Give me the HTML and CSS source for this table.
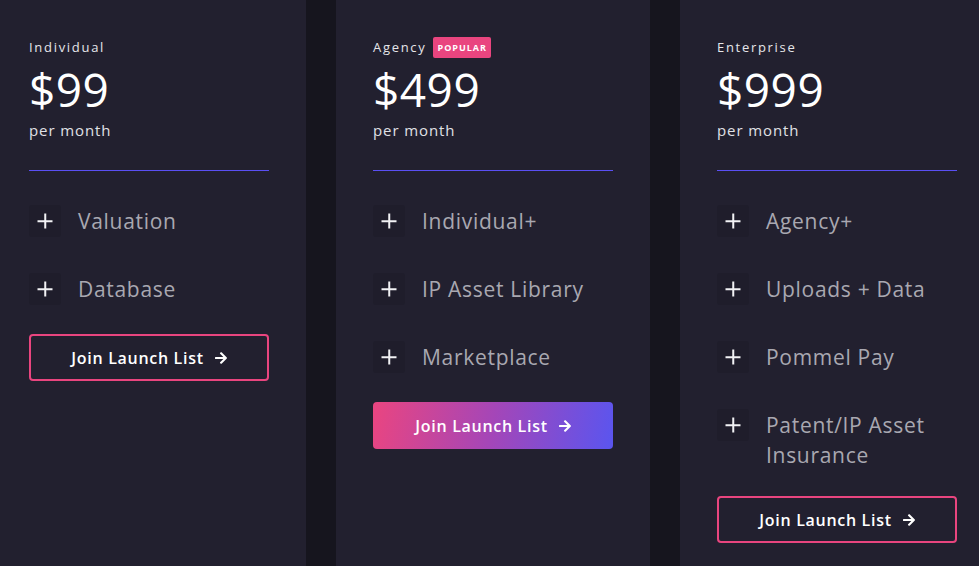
FILE: index.html
```html
<!DOCTYPE html>
<html>
<head>
<meta charset="utf-8">
<link rel="stylesheet" href="styles.css">
</head>
<body>
<div class="plans">
  <section class="card">
    <div class="label">Individual</div>
    <div class="price">$99</div>
    <div class="period">per month</div>
    <div class="divider"></div>
    <ul class="features">
      <li><span class="plus"></span><span class="ftext">Valuation</span></li>
      <li><span class="plus"></span><span class="ftext">Database</span></li>
    </ul>
    <a class="btn btn-outline">Join Launch List <svg class="arrow" viewBox="0 0 448 512"><path d="M190.5 66.9l22.2-22.2c9.4-9.4 24.6-9.4 33.9 0L441 239c9.4 9.4 9.4 24.6 0 33.9L246.6 467.3c-9.4 9.4-24.6 9.4-33.9 0l-22.2-22.2c-9.5-9.5-9.3-25 .4-34.3L311.4 296H24c-13.3 0-24-10.7-24-24v-32c0-13.3 10.7-24 24-24h287.4L190.9 101.2c-9.8-9.3-10-24.8-.4-34.3z"/></svg></a>
  </section>
  <section class="card">
    <div class="label">Agency <span class="badge">POPULAR</span></div>
    <div class="price">$499</div>
    <div class="period">per month</div>
    <div class="divider"></div>
    <ul class="features">
      <li><span class="plus"></span><span class="ftext">Individual+</span></li>
      <li><span class="plus"></span><span class="ftext">IP Asset Library</span></li>
      <li><span class="plus"></span><span class="ftext">Marketplace</span></li>
    </ul>
    <a class="btn btn-fill">Join Launch List <svg class="arrow" viewBox="0 0 448 512"><path d="M190.5 66.9l22.2-22.2c9.4-9.4 24.6-9.4 33.9 0L441 239c9.4 9.4 9.4 24.6 0 33.9L246.6 467.3c-9.4 9.4-24.6 9.4-33.9 0l-22.2-22.2c-9.5-9.5-9.3-25 .4-34.3L311.4 296H24c-13.3 0-24-10.7-24-24v-32c0-13.3 10.7-24 24-24h287.4L190.9 101.2c-9.8-9.3-10-24.8-.4-34.3z"/></svg></a>
  </section>
  <section class="card">
    <div class="label">Enterprise</div>
    <div class="price">$999</div>
    <div class="period">per month</div>
    <div class="divider"></div>
    <ul class="features">
      <li><span class="plus"></span><span class="ftext">Agency+</span></li>
      <li><span class="plus"></span><span class="ftext">Uploads + Data</span></li>
      <li><span class="plus"></span><span class="ftext">Pommel Pay</span></li>
      <li><span class="plus"></span><span class="ftext">Patent/IP Asset Insurance</span></li>
    </ul>
    <a class="btn btn-outline">Join Launch List <svg class="arrow" viewBox="0 0 448 512"><path d="M190.5 66.9l22.2-22.2c9.4-9.4 24.6-9.4 33.9 0L441 239c9.4 9.4 9.4 24.6 0 33.9L246.6 467.3c-9.4 9.4-24.6 9.4-33.9 0l-22.2-22.2c-9.5-9.5-9.3-25 .4-34.3L311.4 296H24c-13.3 0-24-10.7-24-24v-32c0-13.3 10.7-24 24-24h287.4L190.9 101.2c-9.8-9.3-10-24.8-.4-34.3z"/></svg></a>
  </section>
</div>
</body>
</html>
```

FILE: styles.css
```css
html, body {
  margin: 0;
  padding: 0;
  background: #16151e;
  height: 100%;
  overflow: hidden;
}
body {
  font-family: "Open Sans", "Noto Sans", sans-serif;
  color: #fff;
}
.plans {
  display: flex;
  gap: 30px;
  margin-left: -8px;
  height: 100%;
}
.card {
  flex: 0 0 314px;
  box-sizing: border-box;
  background: #22202f;
  padding: 36px 37px 0;
  display: flex;
  flex-direction: column;
  align-items: stretch;
}
.label {
  font-size: 13px;
  line-height: 22px;
  letter-spacing: 1.7px;
  color: #e6e6ea;
  display: flex;
  align-items: center;
  gap: 6px;
}
.badge {
  background: #e9457f;
  color: #fff;
  font-size: 9px;
  font-weight: 700;
  letter-spacing: 1px;
  line-height: 21px;
  padding: 0 4px 0 5px;
  border-radius: 2px;
}
.price {
  font-size: 46px;
  line-height: 52px;
  margin-top: 5px;
  letter-spacing: 0.5px;
}
.period {
  font-size: 15px;
  line-height: 22px;
  margin-top: 4px;
  color: #e0e0e6;
  letter-spacing: 0.9px;
}
.divider {
  border-top: 1px solid #5a4ff3;
  margin: 29px 0 0;
}
.features {
  list-style: none;
  margin: 35px 0 0;
  padding: 0;
  display: flex;
  flex-direction: column;
  gap: 37px;
}
.features li {
  display: flex;
  align-items: flex-start;
}
.plus {
  flex: 0 0 32px;
  height: 32px;
  margin-top: -1px;
  margin-right: 17px;
  background: #1f1d2b;
  border-radius: 3px;
  position: relative;
}
.plus::before, .plus::after {
  content: "";
  position: absolute;
  background: #f2f2f5;
  left: 50%;
  top: 50%;
}
.plus::before {
  width: 15px;
  height: 1.5px;
  transform: translate(-50%, -50%);
}
.plus::after {
  width: 1.5px;
  height: 15px;
  transform: translate(-50%, -50%);
}
.ftext {
  font-size: 21px;
  line-height: 30px;
  color: #a9a8b1;
  letter-spacing: 0.7px;
}
.btn {
  margin-top: 29px;
  height: 47px;
  box-sizing: border-box;
  border-radius: 4px;
  display: flex;
  align-items: center;
  justify-content: center;
  gap: 11px;
  font-size: 16px;
  font-weight: 600;
  color: #fff;
  letter-spacing: 0.7px;
}
.btn-outline {
  border: 2px solid #e9457f;
}
.btn-fill {
  background: linear-gradient(100deg, #ea4580 0%, #a446b8 50%, #5a55ef 100%);
}
.arrow {
  width: 12px;
  height: 14px;
  fill: #fff;
}
.card:nth-child(3) .btn {
  margin-top: 26px;
}
```
